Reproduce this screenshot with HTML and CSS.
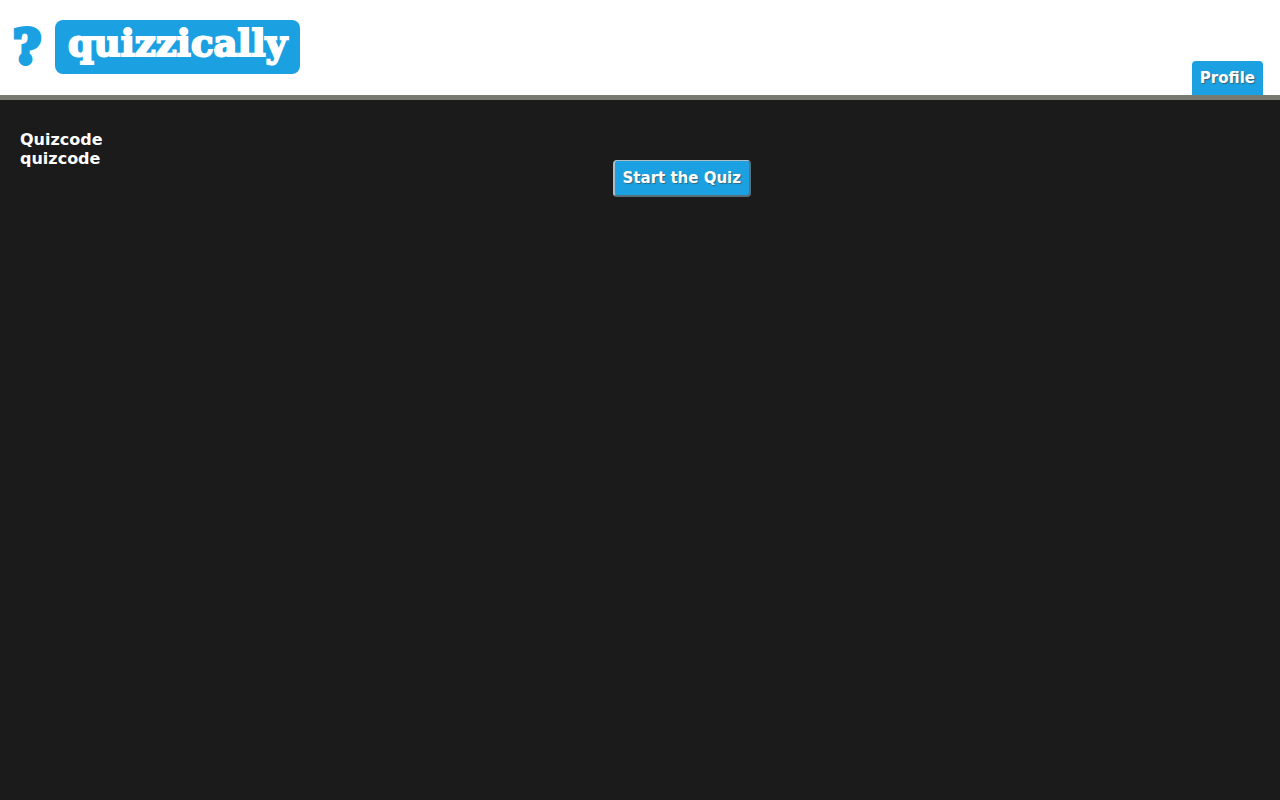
FILE: index.html
```html
<!DOCTYPE html>
<html lang="en">
<head>
<meta charset="utf-8">
<title>quizzically</title>
<link rel="stylesheet" href="styles.css">
</head>
<body>
<header class="header">
  <a class="logo" href="#"><span class="logo-mark">?</span><span class="logo-name">quizzically</span></a>
  <nav><a class="tab" href="#">Profile</a></nav>
</header>
<main class="content">
  <div class="code">Quizcode<br>quizcode</div>
  <form class="start"><button class="start-button" type="button">Start the Quiz</button></form>
</main>
</body>
</html>
```
FILE: styles.css
```css
* { box-sizing: border-box; }
body {
  margin: 0;
  background: #1b1b1b;
  color: #fff;
  font: bold 16px/19px "DejaVu Sans", sans-serif;
}
.header {
  display: flex;
  justify-content: space-between;
  align-items: flex-end;
  min-height: 100px;
  padding: 0 17px 0 13px;
  background: #fff;
  border-bottom: 5px solid #787a72;
}
.logo {
  display: flex;
  align-items: center;
  gap: 14px;
  margin-bottom: 21px;
  font: bold 37px/46px "DejaVu Serif", serif;
  stroke-linejoin: round;
  text-decoration: none;
}
.logo-mark {
  width: 28px;
  color: #1ba1e2;
  font-size: 47px;
  line-height: 54px;
  text-align: center;
  -webkit-text-stroke: 5px #1ba1e2;
}
.logo-name {
  padding: 0 13px 8px;
  border-radius: 8px;
  background: #1ba1e2;
  color: #fff;
  -webkit-text-stroke: 2px #fff;
}
.tab, .start-button {
  color: #fff;
  background: #1ba1e2;
  font: bold 15px/18px "DejaVu Sans", sans-serif;
  text-shadow: 1px 1px 1px #33667f;
}
.tab {
  display: block;
  padding: 8px;
  border-radius: 4px 4px 0 0;
  text-decoration: none;
}
.content {
  display: flex;
  padding: 30px 19px 30px 20px;
}
.start {
  flex: 1;
  padding-top: 30px;
  text-align: center;
}
.start-button {
  padding: 8px;
  border: 2px solid;
  border-color: #aebdc5 #56717e #56717e #aebdc5;
  border-top-width: 1px;
  border-radius: 4px;
}
```
